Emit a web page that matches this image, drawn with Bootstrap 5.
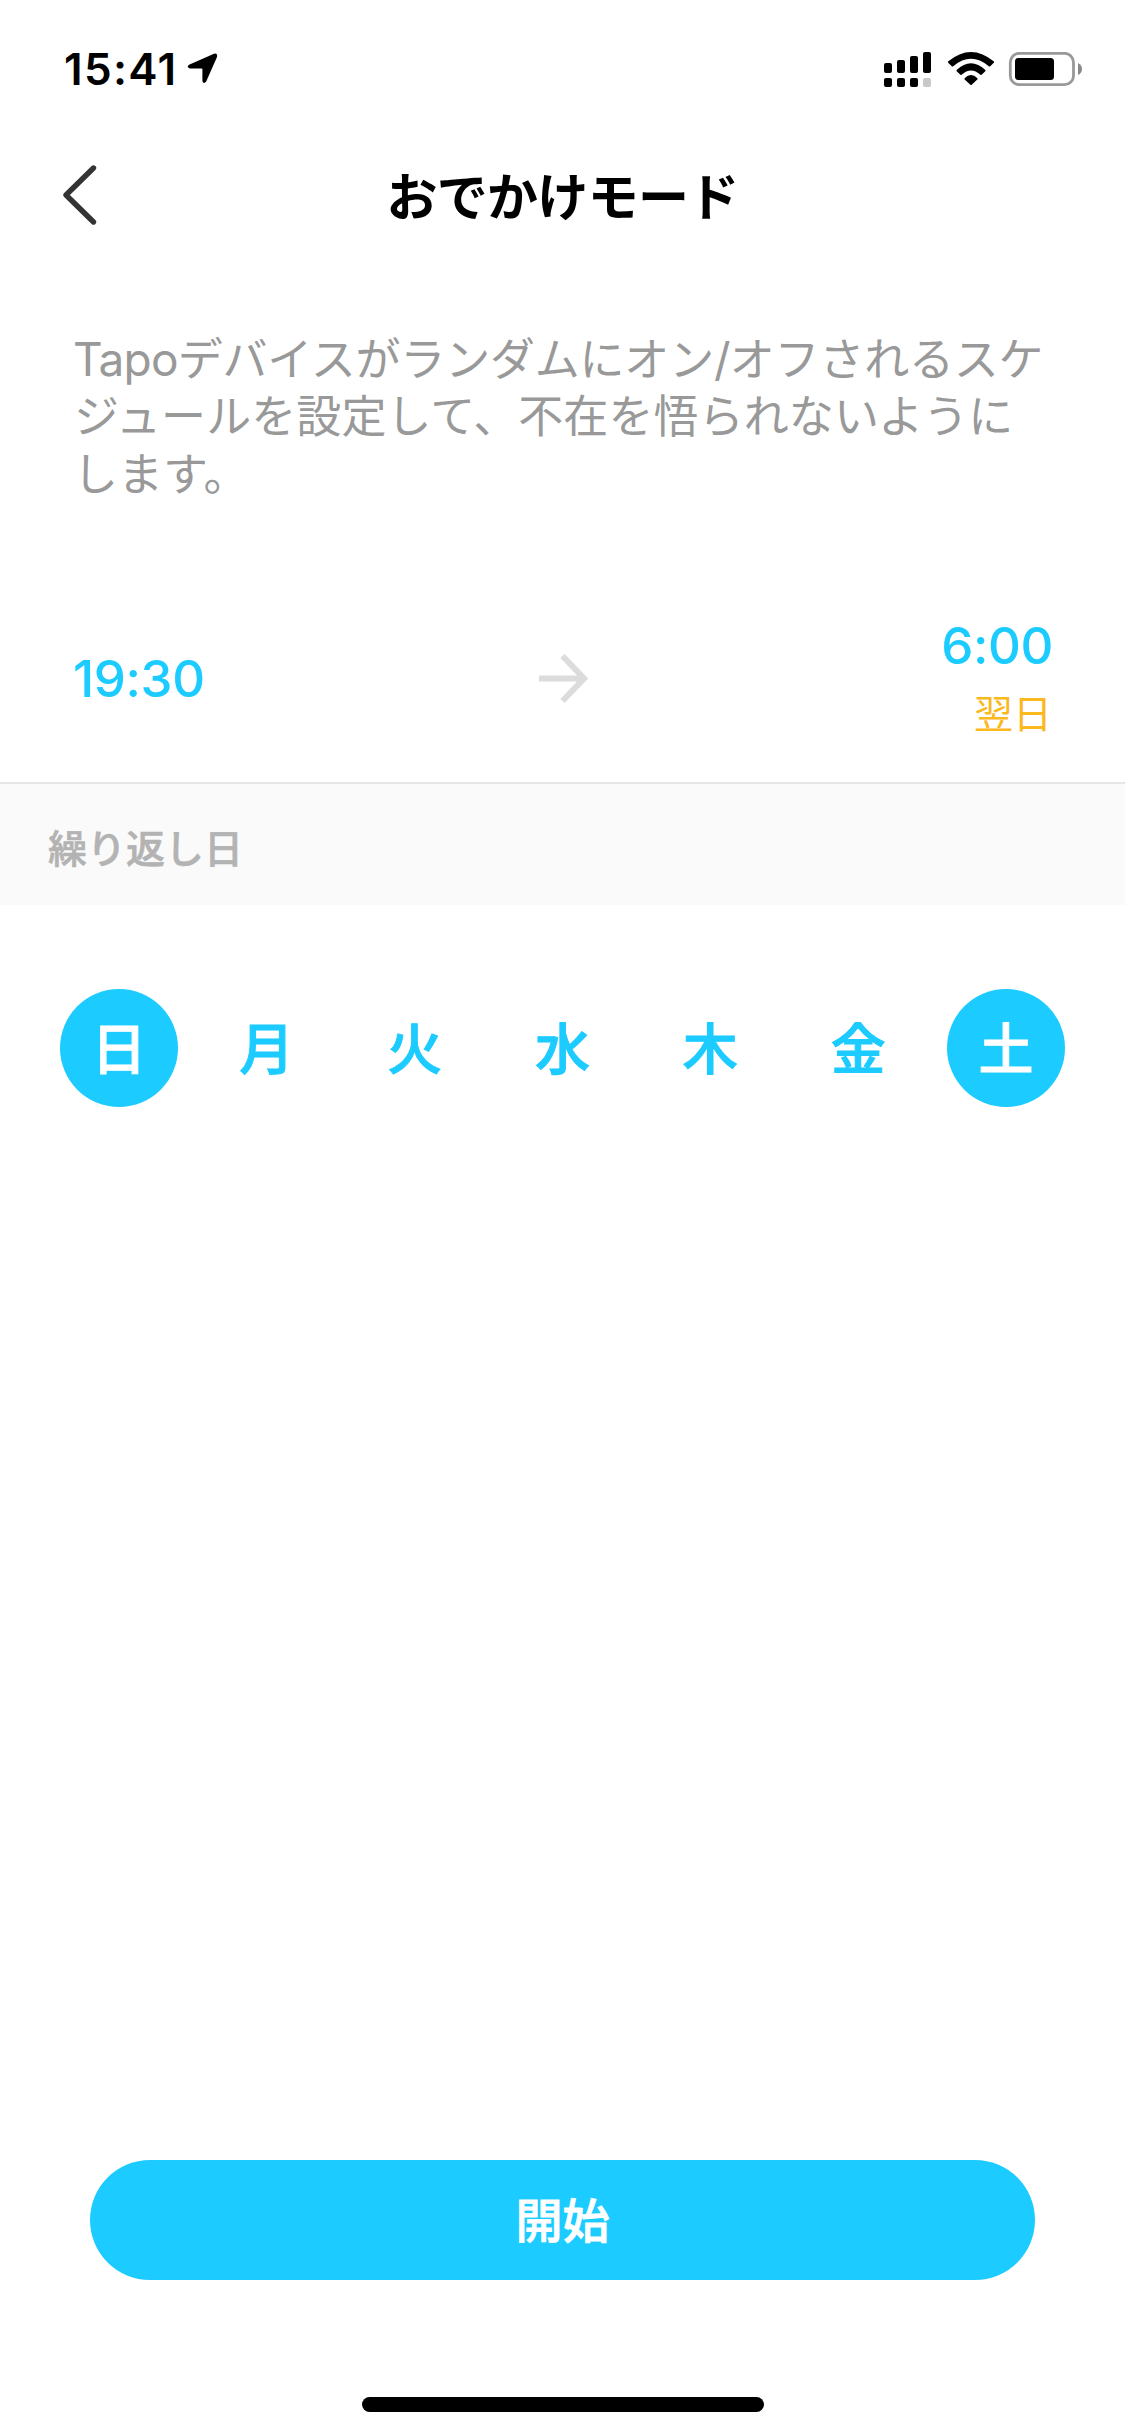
<!DOCTYPE html>
<html lang="ja">
<head>
<meta charset="utf-8">
<meta name="viewport" content="width=device-width, initial-scale=1">
<title>おでかけモード</title>
<link href="https://cdn.jsdelivr.net/npm/bootstrap@5.3.0/dist/css/bootstrap.min.css" rel="stylesheet">
<style>
  :root { --tapo: #1ccbff; }
  body { font-family: Inter, "Noto Sans CJK JP", sans-serif; color: #000; background: #fff; }
  .screen { width: 1125px; height: 2436px; overflow: hidden; }
  .status { height: 132px; padding: 7px 41px 0 64px; }
  .clock { font-size: 44px; font-weight: 600; line-height: 60px; letter-spacing: 1.3px; margin-top: -2px; }
  .topbar { height: 126px; padding: 0 60px; }
  .topbar .side { width: 40px; }
  .topbar h1 { font-size: 51px; font-weight: 700; line-height: 76px; letter-spacing: -.7px; padding-top: 6px; }
  .intro { padding: 73px 73px 0; height: 316px; font-size: 45px; line-height: 57.3px; color: #999; }
  .intro .latin { font-size: 46px; line-height: 1; letter-spacing: -.8px; }
  .intro .tight { letter-spacing: -.2px; }
  .intro .loose { letter-spacing: .1px; margin-left: 1px; }
  .times { height: 210px; padding: 1px 72px 0 73px; color: var(--tapo); border-bottom: 2px solid #e6e6e6; }
  .hour { font-size: 51px; font-weight: 500; line-height: 62px; letter-spacing: -.4px; }
  .nextday { font-size: 39px; line-height: 56px; color: #fbb81f; font-weight: 400; padding: 9px 1px 0 0; }
  .sect { height: 121px; padding: 10px 48px 0; background: #fafafa; color: #b3b3b3; font-size: 39px; font-weight: 500; -webkit-text-stroke: .6px currentColor; }
  .days { padding: 84px 60px 0; }
  .day { width: 118px; height: 118px; font-size: 55px; font-weight: 500; -webkit-text-stroke: 1px currentColor; line-height: 1; color: var(--tapo); background: none; border: 0; padding: 3px 0 0; }
  .day.on { background: var(--tapo); color: #fff; }
  .start { margin: 0 90px 117px; height: 120px; background: var(--tapo); color: #fff; font-size: 47px; font-weight: 500; -webkit-text-stroke: .8px currentColor; }
  .start span { display: block; padding-top: 3px; }
  .homebar { width: 402px; height: 15px; margin-bottom: 24px; background: #000; }
</style>
</head>
<body>
<main class="screen d-flex flex-column">
  <div class="status d-flex align-items-center justify-content-between flex-shrink-0">
    <div class="d-flex align-items-center">
      <span class="clock">15:41</span>
      <svg class="ms-2" width="33" height="33" viewBox="-2 0 33 33"><path d="M27 .8 2 11.8Q-1 14 2.8 15.5H14.6Q15.4 15.5 15.4 16.3V28Q16.6 31.8 19.2 28.6L30 4Q30.8 -.2 27 .8Z"/></svg>
    </div>
    <svg width="200" height="36" viewBox="884 52 200 36">
      <g><rect x="884" y="63" width="8" height="10" rx="2"/><rect x="897" y="60" width="8" height="13" rx="2"/><rect x="910" y="56" width="8" height="17" rx="2"/><rect x="923" y="52" width="8" height="21" rx="2"/>
      <rect x="884" y="78" width="8" height="9" rx="2"/><rect x="897" y="78" width="8" height="9" rx="2"/><rect x="910" y="78" width="8" height="9" rx="2"/><rect x="923" y="78" width="8" height="9" rx="2" fill="#c8c8c8"/></g>
      <path d="M948 61.6Q971 42.4 994 61.6Q994.3 62.3 993.8 62.8L990 66.4Q989.3 66.6 988.8 66.3Q971 51.4 953.2 66.3Q952.7 66.6 952 66.4L948.2 62.8Q947.7 62.3 948 61.6Z"/>
      <path d="M956.6 70.1Q971 56.6 985.4 70.1Q985.8 70.8 985.3 71.3L981.6 74.8Q980.9 75.1 980.4 74.8Q971 66 961.6 74.8Q961.1 75.1 960.4 74.8L956.7 71.3Q956.2 70.8 956.6 70.1Z"/>
      <path d="M964.6 78.2Q971 72 977.4 78.2Q977.8 78.9 977.3 79.4L971.7 84.8Q971 85.3 970.3 84.8L964.7 79.4Q964.2 78.9 964.6 78.2Z"/>
      <rect x="1010.3" y="53.3" width="63.2" height="31.4" rx="9" fill="none" stroke="#999" stroke-width="2.8"/>
      <rect x="1015" y="58" width="39" height="22" rx="3.5"/>
      <path d="M1078 63Q1082 65 1082 69T1078 75Z" fill="#888"/>
    </svg>
  </div>

  <header class="topbar d-flex align-items-center justify-content-between flex-shrink-0">
    <svg class="side" width="40" height="66" viewBox="0 0 40 66"><path d="M33.5 6 6 33 33.5 60" fill="none" stroke="#333" stroke-width="5.4" stroke-linecap="round" stroke-linejoin="round"/></svg>
    <h1 class="m-0">おでかけモード</h1>
    <span class="side"></span>
  </header>

  <p class="intro m-0 flex-shrink-0 text-nowrap"><span class="tight"><span class="latin">Tapo</span>デバイスがランダムにオン<span class="latin">/</span>オフされるスケ</span><br><span class="loose">ジュールを設定して、不在を悟られないように</span><br>します。</p>

  <section class="times d-flex align-items-center justify-content-between flex-shrink-0">
    <div class="hour col">19:30</div>
    <svg width="50" height="50" viewBox="0 0 50 50"><path d="M1 24.5H45M24.5 2 46 24.5 24.5 47" fill="none" stroke="#dcdcdc" stroke-width="6"/></svg>
    <div class="col text-end">
      <div class="hour">6:00</div>
      <div class="nextday">翌日</div>
    </div>
  </section>

  <div class="sect d-flex align-items-center flex-shrink-0">繰り返し日</div>

  <div class="days d-flex justify-content-between">
    <button class="day on rounded-circle">日</button>
    <button class="day">月</button>
    <button class="day">火</button>
    <button class="day">水</button>
    <button class="day">木</button>
    <button class="day">金</button>
    <button class="day on rounded-circle">土</button>
  </div>

  <button class="start btn rounded-pill border-0 p-0 mt-auto flex-shrink-0"><span>開始</span></button>
  <div class="homebar rounded-pill mx-auto flex-shrink-0"></div>
</main>
<script src="https://cdn.jsdelivr.net/npm/bootstrap@5.3.0/dist/js/bootstrap.bundle.min.js"></script>
</body>
</html>
